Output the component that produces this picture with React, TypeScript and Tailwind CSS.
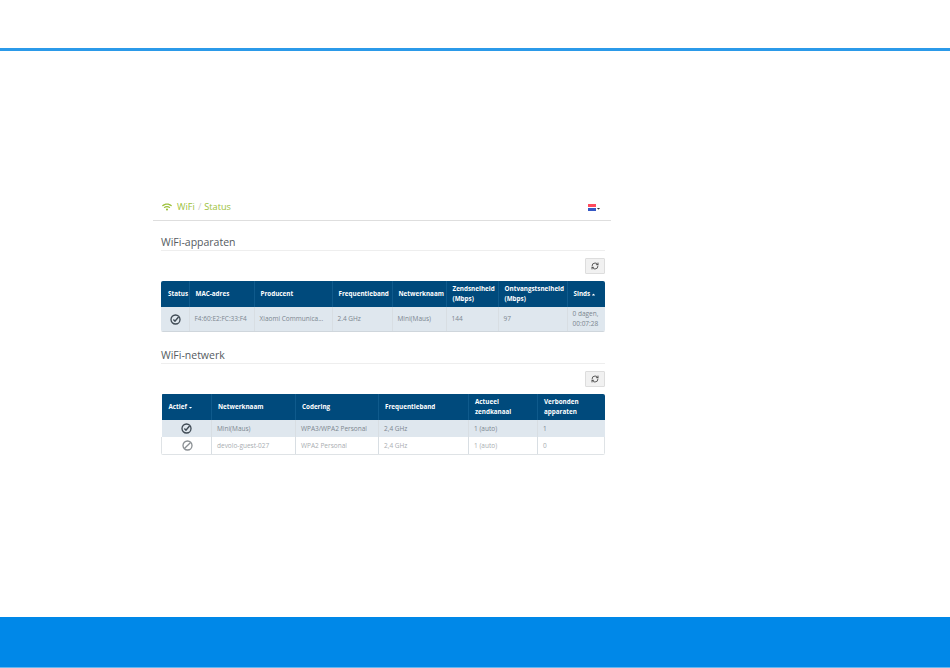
import React from 'react';
import { FaWifi, FaCaretDown, FaCaretUp } from 'react-icons/fa';
import { RefreshCw } from 'lucide-react';

const CheckIcon = () => (
  <svg width="11" height="11" viewBox="0 0 20 20" fill="none" className="mx-auto block text-[#3f4a54]">
    <circle cx="10" cy="10" r="8.2" stroke="currentColor" strokeWidth="2.4" />
    <path d="M6.2 10.2 L9 13 L15.5 5.5" stroke="currentColor" strokeWidth="2.6" />
  </svg>
);

const BanIcon = () => (
  <svg width="11" height="11" viewBox="0 0 20 20" fill="none" className="mx-auto block text-[#8a8f93]">
    <circle cx="10" cy="10" r="8.2" stroke="currentColor" strokeWidth="2.4" />
    <path d="M4.5 15.5 L15.5 4.5" stroke="currentColor" strokeWidth="2.4" />
  </svg>
);

const RefreshButton = () => (
  <div className="flex justify-end">
    <button className="flex h-4 w-5 items-center justify-center rounded-[1px] border border-[#dddddd] bg-[#f1f1f1]">
      <RefreshCw size={8} strokeWidth={2.6} className="text-[#444]" />
    </button>
  </div>
);

const th = 'px-[6px] text-left align-middle text-[6.3px] font-bold leading-[10px] border-r border-[#0f5a8c] last:border-r-0 first:pl-[7px]';
const td = 'px-[5px] align-middle leading-[10px] border-r border-[#d8dee3] last:border-r-0 first:pl-[6px]';

const App: React.FC = () => {
  return (
    <div className="flex h-[668px] flex-col bg-white font-['Open_Sans',sans-serif]">
      <div className="h-[48px] shrink-0" />
      <div className="h-[3px] shrink-0 bg-[#2b9ae9]" />

      <main className="flex-1 pl-[153px] pr-[339px] pt-[147px]">
        <div className="flex h-[23px] items-center justify-between border-b border-[#dedede] pb-[4px] pl-[9px] pr-[10px]">
          <div className="flex items-center text-[9.2px] text-[#9cc13a]">
            <FaWifi size={10} className="mr-[5px]" />
            <span>WiFi</span>
            <span className="mx-[3px] text-[#cccccc]">/</span>
            <span>Status</span>
          </div>
          <div className="flex items-end">
            <div className="flex w-[8px] flex-col">
              <div className="h-[3px] bg-[#ff4a5c]" />
              <div className="h-[1px] bg-white" />
              <div className="h-[3px] bg-[#3557c4]" />
            </div>
            <FaCaretDown size={5} className="text-[#333]" />
          </div>
        </div>

        <section className="pl-[8px] pr-[6px] pt-[14px]">
          <h2 className="border-b border-[#eeeeee] pb-[1px] text-[10.5px] leading-[14px] text-[#555b61]">WiFi-apparaten</h2>
          <div className="mt-[7px]"><RefreshButton /></div>
          <div className="mt-[7px] overflow-hidden rounded-[2px] border-b border-[#cfd6dc]">
            <table className="w-full table-fixed border-collapse text-[6.5px]">
              <thead>
                <tr className="h-[26px] bg-[#004a7c] text-white">
                  <th className={th + ' w-[28px]'}>Status</th>
                  <th className={th + ' w-[65px]'}>MAC-adres</th>
                  <th className={th + ' w-[78px]'}>Producent</th>
                  <th className={th + ' w-[60px]'}>Frequentieband</th>
                  <th className={th + ' w-[54px]'}>Netwerknaam</th>
                  <th className={th + ' w-[52px]'}>Zendsnelheid (Mbps)</th>
                  <th className={th + ' w-[69px]'}>Ontvangstsnelheid (Mbps)</th>
                  <th className={th}>
                    <span className="inline-flex items-center">Sinds<FaCaretUp size={5} className="ml-[1px]" /></span>
                  </th>
                </tr>
              </thead>
              <tbody>
                <tr className="h-[24px] bg-[#dfe7ee] text-[#7b868f]">
                  <td className={td}><CheckIcon /></td>
                  <td className={td}>F4:60:E2:FC:33:F4</td>
                  <td className={td}>Xiaomi Communica...</td>
                  <td className={td}>2.4 GHz</td>
                  <td className={td}>Mini(Maus)</td>
                  <td className={td}>144</td>
                  <td className={td}>97</td>
                  <td className={td}>0 dagen,<br />00:07:28</td>
                </tr>
              </tbody>
            </table>
          </div>
        </section>

        <section className="pl-[8px] pr-[6px] pt-[16px]">
          <h2 className="border-b border-[#eeeeee] pb-[1px] text-[10.5px] leading-[14px] text-[#555b61]">WiFi-netwerk</h2>
          <div className="mt-[7px]"><RefreshButton /></div>
          <div className="mt-[7px] overflow-hidden rounded-[2px] border-b border-[#dfe3e6]">
            <table className="w-full table-fixed border-collapse text-[6.5px]">
              <thead>
                <tr className="h-[26px] bg-[#004a7c] text-white">
                  <th className={th + ' w-[50px]'}>
                    <span className="inline-flex items-center">Actief<FaCaretDown size={5} className="ml-[1px]" /></span>
                  </th>
                  <th className={th + ' w-[84px]'}>Netwerknaam</th>
                  <th className={th + ' w-[83px]'}>Codering</th>
                  <th className={th + ' w-[90px]'}>Frequentieband</th>
                  <th className={th + ' w-[69px]'}>Actueel zendkanaal</th>
                  <th className={th}>Verbonden apparaten</th>
                </tr>
              </thead>
              <tbody>
                <tr className="h-[17px] bg-[#dfe7ee] text-[#7b868f]">
                  <td className={td}><CheckIcon /></td>
                  <td className={td}>Mini(Maus)</td>
                  <td className={td}>WPA3/WPA2 Personal</td>
                  <td className={td}>2,4 GHz</td>
                  <td className={td}>1 (auto)</td>
                  <td className={td}>1</td>
                </tr>
                <tr className="h-[17px] border-x border-[#dfe3e6] bg-white text-[#a8adb1]">
                  <td className={td}><BanIcon /></td>
                  <td className={td}>devolo-guest-027</td>
                  <td className={td}>WPA2 Personal</td>
                  <td className={td}>2,4 GHz</td>
                  <td className={td}>1 (auto)</td>
                  <td className={td}>0</td>
                </tr>
              </tbody>
            </table>
          </div>
        </section>
      </main>

      <footer className="h-[50px] shrink-0 bg-[#0088e8]" />
      <div className="h-px shrink-0 bg-[#66b8f0]" />
    </div>
  );
};

export default App;
